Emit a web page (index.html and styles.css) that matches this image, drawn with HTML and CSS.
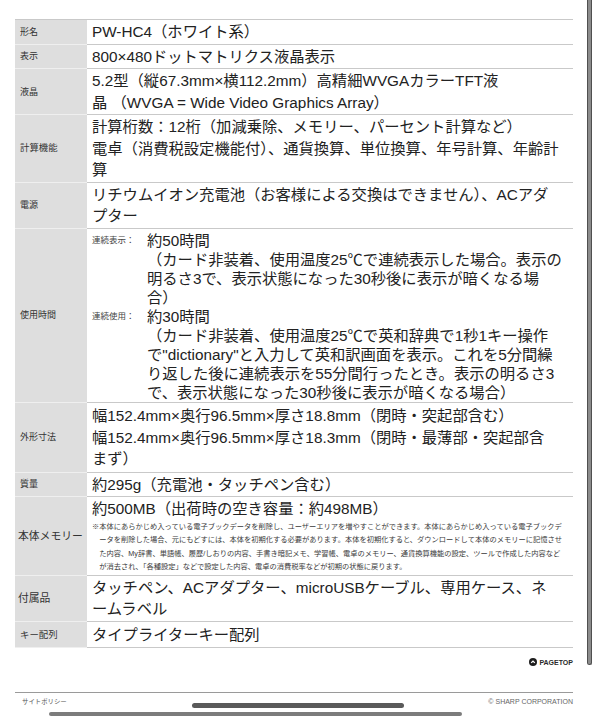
FILE: index.html
```html
<!DOCTYPE html>
<html lang="ja">
<head>
<meta charset="utf-8">
<title>PW-HC4 仕様</title>
<link rel="stylesheet" href="styles.css">
</head>
<body>
<div class="page">
  <table class="spec">
    <tbody>
      <tr><th>形名</th><td>PW-HC4（ホワイト系）</td></tr>
      <tr><th>表示</th><td>800×480ドットマトリクス液晶表示</td></tr>
      <tr><th>液晶</th><td>5.2型（縦67.3mm×横112.2mm）高精細WVGAカラーTFT液<br>晶 （WVGA = Wide Video Graphics Array）</td></tr>
      <tr><th class="lbl-md">計算機能</th><td>計算桁数：12桁（加減乗除、メモリー、パーセント計算など）<br>電卓（消費税設定機能付）、通貨換算、単位換算、年号計算、年齢計<br>算</td></tr>
      <tr><th>電源</th><td>リチウムイオン充電池（お客様による交換はできません）、ACアダ<br>プター</td></tr>
      <tr><th>使用時間</th><td class="nested">
        <dl class="usage">
          <dt>連続表示：</dt>
          <dd>約50時間<br>（カード非装着、使用温度25℃で連続表示した場合。表示の<br>明るさ3で、表示状態になった30秒後に表示が暗くなる場<br>合）</dd>
          <dt>連続使用：</dt>
          <dd>約30時間<br>（カード非装着、使用温度25℃で英和辞典で1秒1キー操作<br>で"dictionary"と入力して英和訳画面を表示。これを5分間繰<br>り返した後に連続表示を55分間行ったとき。表示の明るさ3<br>で、表示状態になった30秒後に表示が暗くなる場合）</dd>
        </dl>
      </td></tr>
      <tr><th>外形寸法</th><td class="roomy">幅152.4mm×奥行96.5mm×厚さ18.8mm（閉時・突起部含む）<br>幅152.4mm×奥行96.5mm×厚さ18.3mm（閉時・最薄部・突起部含<br>まず）</td></tr>
      <tr><th>質量</th><td>約295g（充電池・タッチペン含む）</td></tr>
      <tr><th class="lbl-lg">本体メモリー</th><td>約500MB（出荷時の空き容量：約498MB）
        <p class="note">※本体にあらかじめ入っている電子ブックデータを削除し、ユーザーエリアを増やすことができます。本体にあらかじめ入っている電子ブックデ<br>ータを削除した場合、元にもどすには、本体を初期化する必要があります。本体を初期化すると、ダウンロードして本体のメモリーに記憶させ<br>た内容、My辞書、単語帳、履歴/しおりの内容、手書き暗記メモ、学習帳、電卓のメモリー、通貨換算機能の設定、ツールで作成した内容など<br>が消去され、「各種設定」などで設定した内容、電卓の消費税率などが初期の状態に戻ります。</p>
      </td></tr>
      <tr><th class="lbl-lg">付属品</th><td>タッチペン、ACアダプター、microUSBケーブル、専用ケース、ネ<br>ームラベル</td></tr>
      <tr><th class="lbl-md">キー配列</th><td class="roomy">タイプライターキー配列</td></tr>
    </tbody>
  </table>

  <div class="pagetop">
    <svg class="pagetop-icon" width="8" height="8" viewBox="0 0 8 8" aria-hidden="true"><circle cx="4" cy="4" r="4" fill="#1e1e1e"/><path d="M2.2 4.9 L4 3.1 L5.8 4.9" stroke="#fff" stroke-width="1.3" fill="none"/></svg>
    <span>PAGETOP</span>
  </div>

  <footer class="footer">
    <span class="policy">サイトポリシー</span>
    <span class="copy">© SHARP CORPORATION</span>
  </footer>
</div>

<div class="vbar"></div>
<div class="hbar hbar-top"></div>
<div class="hbar hbar-bottom"></div>
</body>
</html>
```

FILE: styles.css
```css
* { box-sizing: border-box; }

html, body {
  margin: 0;
  padding: 0;
  background: #fff;
}

body {
  font-family: "Liberation Sans", "Noto Sans CJK JP", sans-serif;
  color: #222;
  width: 596px;
  height: 720px;
  overflow: hidden;
  position: relative;
}

.page {
  padding: 19px 23px 0 15px;
}

.spec {
  width: 558px;
  border-collapse: separate;
  border-spacing: 0;
  table-layout: fixed;
}

.spec th {
  width: 72px;
  background: #dedede;
  font-weight: normal;
  text-align: left;
  vertical-align: middle;
  font-size: 9px;
  line-height: 12px;
  color: #333;
  padding: 0 3px 0 5px;
  border-bottom: 1px solid #efefef;
  white-space: nowrap;
}

.spec th.lbl-md { font-size: 9.4px; }
.spec th.lbl-lg { font-size: 10.8px; padding-left: 3px; }

.spec td {
  font-size: 15.3px;
  line-height: 21.5px;
  padding: 1px 3px 1px 5px;
  vertical-align: top;
  white-space: nowrap;
  border-bottom: 1px solid #c9c9c9;
}

.spec td.roomy {
  padding-top: 2px;
  padding-bottom: 2px;
}

.spec tr:first-child th,
.spec tr:first-child td {
  border-top: 1px solid #c9c9c9;
}

.spec td.nested {
  padding: 2.5px 3px 0 5px;
}

.usage {
  display: grid;
  grid-template-columns: 55px auto;
  margin: 0;
  line-height: 19px;
}

.usage dt {
  font-size: 8.5px;
  line-height: 14px;
  padding-top: 2px;
  color: #444;
}

.usage dd {
  margin: 0;
}

.note {
  margin: 0;
  font-size: 7.25px;
  line-height: 13.6px;
  color: #3a3a3a;
  padding-left: 1em;
  text-indent: -1em;
}

.pagetop {
  display: flex;
  justify-content: flex-end;
  align-items: center;
  gap: 2px;
  margin-top: 9px;
  height: 10px;
  font-size: 7px;
  font-weight: bold;
  color: #2a2a2a;
}

.pagetop-icon {
  display: block;
}

.footer {
  margin-top: 25px;
  border-top: 1px solid #9a9a9a;
  display: flex;
  justify-content: space-between;
  align-items: center;
  padding: 4px 0 0 7px;
  height: 13px;
}

.policy {
  font-size: 6.4px;
  color: #555;
}

.copy {
  font-size: 7px;
  color: #666;
}

.vbar {
  position: absolute;
  left: 587px;
  top: 0;
  width: 5px;
  height: 665px;
  background: #8c8c8c;
  border: 1px solid #505050;
  border-top: none;
  border-radius: 0 0 3px 3px;
}

.hbar {
  position: absolute;
}

.hbar-top {
  left: 192px;
  top: 703px;
  width: 212px;
  height: 5px;
  background: #5a5a5a;
  border-radius: 3px;
}

.hbar-bottom {
  left: 49px;
  top: 712px;
  width: 413px;
  height: 4px;
  background: #7c7c7c;
  border-radius: 2px;
}
```
